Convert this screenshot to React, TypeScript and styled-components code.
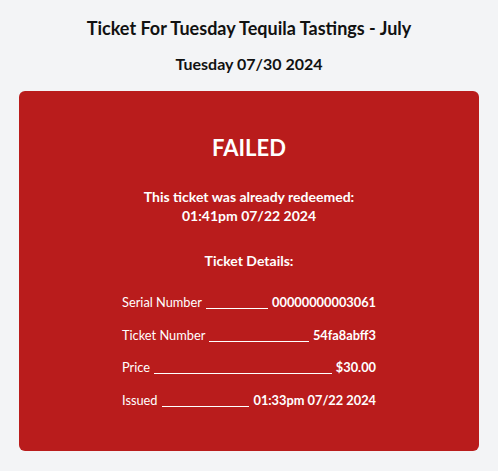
import * as React from 'react'
import styled, { createGlobalStyle } from 'styled-components'

const GlobalStyle = createGlobalStyle`
    html, body {
        margin: 0;
        padding: 0;
        background: #f3f4f6;
        font-family: Lato, "Noto Sans", sans-serif;
    }
`;

const Page = styled.div`
    padding: 14px 19px 20px;
    display: flex;
    flex-direction: column;
    align-items: center;
`;

const Title = styled.h1`
    margin: 0;
    font-size: 18px;
    line-height: 28px;
    font-weight: 700;
    color: #111;
    text-align: center;
`;

const SubTitle = styled.h2`
    margin: 10px 0 0;
    font-size: 16px;
    line-height: 24px;
    font-weight: 700;
    color: #111;
    text-align: center;
`;

const Card = styled.div<{ $status: 'failed' | 'ok' }>`
    align-self: stretch;
    margin-top: 15px;
    height: 360px;
    box-sizing: border-box;
    padding: 41px 20px 0;
    border-radius: 6px;
    background: ${p => (p.$status === 'failed' ? '#b91c1c' : '#15803d')};
    color: #fff;
    display: flex;
    flex-direction: column;
    align-items: center;
`;

const Status = styled.div`
    font-size: 22px;
    line-height: 32px;
    font-weight: 700;
`;

const Message = styled.p`
    margin: 23px 0 0;
    font-size: 14px;
    line-height: 19px;
    font-weight: 700;
    text-align: center;
`;

const DetailsTitle = styled.h3`
    margin: 26px 0 21px;
    font-size: 14px;
    line-height: 20px;
    font-weight: 700;
`;

const Details = styled.div`
    width: 254px;
    display: flex;
    flex-direction: column;
    gap: 12.5px;
`;

const Row = styled.div`
    display: flex;
    align-items: flex-end;
    font-size: 12.8px;
    line-height: 20px;
`;

const Label = styled.span`
    font-weight: 400;
`;

const Leader = styled.span`
    flex: 1;
    margin: 0 4px 3px;
    border-bottom: 1px solid #fff;
`;

const Value = styled.span`
    font-weight: 700;
`;

const details = [
    { label: 'Serial Number', value: '00000000003061' },
    { label: 'Ticket Number', value: '54fa8abff3' },
    { label: 'Price', value: '$30.00' },
    { label: 'Issued', value: '01:33pm 07/22 2024' },
];

export default function App() {
    return (
        <>
            <GlobalStyle />
            <Page>
                <Title>Ticket For Tuesday Tequila Tastings - July</Title>
                <SubTitle>Tuesday 07/30 2024</SubTitle>
                <Card $status="failed">
                    <Status>FAILED</Status>
                    <Message>
                        This ticket was already redeemed:
                        <br />
                        01:41pm 07/22 2024
                    </Message>
                    <DetailsTitle>Ticket Details:</DetailsTitle>
                    <Details>
                        {details.map(d => (
                            <Row key={d.label}>
                                <Label>{d.label}</Label>
                                <Leader />
                                <Value>{d.value}</Value>
                            </Row>
                        ))}
                    </Details>
                </Card>
            </Page>
        </>
    )
}
